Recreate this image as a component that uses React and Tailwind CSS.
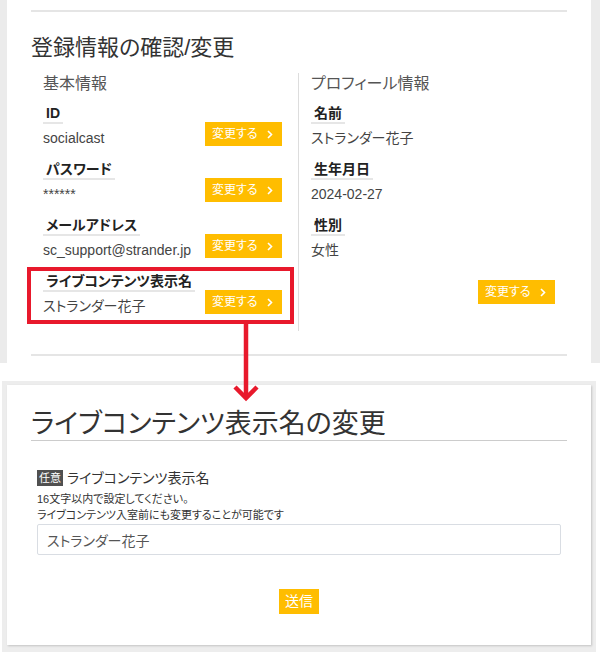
import React from 'react';

const font = "font-['Liberation_Sans','Noto_Sans_CJK_JP',sans-serif] [font-feature-settings:'palt']";

const Chevron = () => (
  <svg width="6" height="9" viewBox="0 0 6 9" fill="none">
    <polyline points="1,1 4.5,4.5 1,8" stroke="#fff" strokeWidth="1.6" />
  </svg>
);

const ChangeButton = ({ className = '' }) => (
  <button
    type="button"
    className={`w-[77px] h-[24px] bg-[#ffbd00] text-white text-[12px] flex items-center justify-between pl-[7px] pr-[9px] ${className}`}
  >
    <span>変更する</span>
    <Chevron />
  </button>
);

const Field = ({ label, value, button }) => (
  <div className="flex items-end justify-between">
    <div className="flex flex-col items-start">
      <div className="px-[3px] border-b-2 border-[#e6e6e6] text-[14px] leading-[17px] font-bold text-[#222]">
        {label}
      </div>
      <div className="mt-[4px] text-[14px] leading-[20px] text-[#444]">{value}</div>
    </div>
    {button && <ChangeButton className="mb-[2px]" />}
  </div>
);

const App = () => {
  return (
    <div className={`relative w-[600px] h-[652px] bg-white overflow-hidden ${font}`}>
      {/* upper screenshot */}
      <div className="flex h-[363px]">
        <div className="w-[7px] bg-[#ebebeb]" />
        <div className="flex-1 px-[24px] pt-[10px]">
          <div className="h-[2px] bg-[#e5e5e5]" />
          <h1 className="mt-[21px] text-[22px] leading-[30px] text-[#333]">登録情報の確認/変更</h1>

          <div className="mt-[10px] flex">
            <div className="w-[268px] pl-[12px] pr-[16px] pb-[15px] border-r border-[#dddddd]">
              <h2 className="text-[16px] leading-[22px] text-[#555]">基本情報</h2>
              <div className="mt-[10px] flex flex-col gap-[13px]">
                <Field label="ID" value="socialcast" button />
                <Field label="パスワード" value="******" button />
                <Field label="メールアドレス" value="sc_support@strander.jp" button />
                <Field label="ライブコンテンツ表示名" value="ストランダー花子" button />
              </div>
            </div>
            <div className="flex-1 pl-[12px] pr-[12px] flex flex-col">
              <h2 className="text-[16px] leading-[22px] text-[#555]">プロフィール情報</h2>
              <div className="mt-[10px] flex flex-col gap-[13px]">
                <Field label="名前" value="ストランダー花子" />
                <Field label="生年月日" value="2024-02-27" />
                <Field label="性別" value="女性" />
              </div>
              <ChangeButton className="mt-[20px] self-end" />
            </div>
          </div>

          <div className="mt-[23px] h-[2px] bg-[#e5e5e5]" />
        </div>
        <div className="w-[9px] bg-[#ebebeb]" />
      </div>

      {/* lower screenshot */}
      <div className="mt-[18px] ml-[2px] w-[594px] bg-[#ededed] pt-[4px] px-[5px] pb-[8px]">
        <div className="bg-white shadow-[1px_1px_2px_rgba(0,0,0,0.18)] pt-[23px] px-[24px] pb-[31px]">
          <h1 className="text-[27px] leading-[32px] text-[#333] border-b border-[#cccccc]">
            ライブコンテンツ表示名の変更
          </h1>
          <div className="px-[6px]">
            <div className="mt-[28px] flex items-center gap-[4px]">
              <span className="w-[26px] h-[16px] bg-[#505050] text-white text-[11px] leading-[16px] text-center">任意</span>
              <span className="text-[14px] leading-[18px] text-[#333]">ライブコンテンツ表示名</span>
            </div>
            <p className="mt-[4px] text-[11px] leading-[16px] text-[#333]">
              16文字以内で設定してください。
              <br />
              ライブコンテンツ入室前にも変更することが可能です
            </p>
            <input
              type="text"
              defaultValue="ストランダー花子"
              className="mt-[1px] block w-full h-[31px] border border-[#d9dde3] rounded-[2px] pl-[9px] text-[14px] text-[#555] outline-none"
            />
            <div className="mt-[34px] flex justify-center">
              <button type="button" className="w-[40px] h-[25px] bg-[#ffbd00] text-white text-[14px]">
                送信
              </button>
            </div>
          </div>
        </div>
      </div>

      {/* annotation overlay */}
      <div className="absolute left-[27px] top-[267px] w-[267px] h-[57px] border-4 border-[#e8192c]" />
      <svg className="absolute left-0 top-0" width="600" height="652" viewBox="0 0 600 652" fill="none">
        <line x1="246" y1="322" x2="246" y2="398" stroke="#e8192c" strokeWidth="4.5" />
        <polyline points="235,387 246,398 257,387" stroke="#e8192c" strokeWidth="4.5" />
      </svg>
    </div>
  );
};

export default App;
